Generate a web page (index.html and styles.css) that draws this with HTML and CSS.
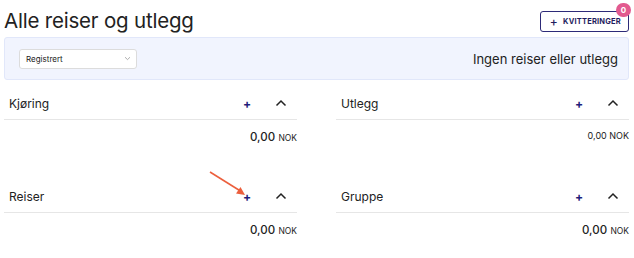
FILE: index.html
```html
<!DOCTYPE html>
<html lang="nb">
<head>
    <meta charset="UTF-8">
    <meta name="viewport" content="width=device-width, initial-scale=1.0">
    <title>Alle reiser og utlegg</title>
    <link rel="stylesheet" href="styles.css">
</head>
<body>
    <div class="page">
        <div class="top">
            <h1>Alle reiser og utlegg</h1>
            <button class="receipts" type="button">
                <span class="plus">+</span> KVITTERINGER
                <span class="badge">0</span>
            </button>
        </div>

        <div class="filter-bar">
            <div class="select">
                <span>Registrert</span>
                <svg width="7" height="5" viewBox="0 0 7 5"><path d="M1 1.2 3.5 3.6 6 1.2" fill="none" stroke="#999" stroke-width="0.8"/></svg>
            </div>
            <div class="empty">Ingen reiser eller utlegg</div>
        </div>

        <div class="sections">
            <div class="section">
                <div class="section-head">
                    <span class="section-title">Kjøring</span>
                    <span class="add">+</span>
                    <svg class="chevron" width="12" height="8" viewBox="0 0 12 8"><path d="M1.5 6.5 6 2 10.5 6.5" fill="none" stroke="#222" stroke-width="1.5"/></svg>
                </div>
                <div class="sum"><b>0,00</b> <small>NOK</small></div>
            </div>
            <div class="section">
                <div class="section-head">
                    <span class="section-title">Utlegg</span>
                    <span class="add">+</span>
                    <svg class="chevron" width="12" height="8" viewBox="0 0 12 8"><path d="M1.5 6.5 6 2 10.5 6.5" fill="none" stroke="#222" stroke-width="1.5"/></svg>
                </div>
                <div class="sum small-sum">0,00 NOK</div>
            </div>
            <div class="section">
                <div class="section-head">
                    <span class="section-title">Reiser</span>
                    <span class="add">+</span>
                    <svg class="chevron" width="12" height="8" viewBox="0 0 12 8"><path d="M1.5 6.5 6 2 10.5 6.5" fill="none" stroke="#222" stroke-width="1.5"/></svg>
                </div>
                <div class="sum"><b>0,00</b> <small>NOK</small></div>
            </div>
            <div class="section">
                <div class="section-head">
                    <span class="section-title">Gruppe</span>
                    <span class="add">+</span>
                    <svg class="chevron" width="12" height="8" viewBox="0 0 12 8"><path d="M1.5 6.5 6 2 10.5 6.5" fill="none" stroke="#222" stroke-width="1.5"/></svg>
                </div>
                <div class="sum"><b>0,00</b> <small>NOK</small></div>
            </div>
        </div>
    </div>

    <svg class="arrow" width="40" height="28" viewBox="0 0 40 28">
        <path d="M1 1 L33 21" stroke="#ec5f3d" stroke-width="1.6" fill="none"/>
        <path d="M36 24 L27 22.5 L31.5 16 Z" fill="#ec5f3d"/>
    </svg>
</body>
</html>
```

FILE: styles.css
```css
body {
    margin: 0;
    font-family: 'Inter', 'Noto Sans', sans-serif;
    color: #222;
    background: #fff;
}
.page {
    padding: 0 5px 0 4px;
}
.top {
    display: flex;
    justify-content: space-between;
    align-items: flex-end;
    height: 33px;
}
h1 {
    margin: 0;
    font-size: 20.5px;
    font-weight: 400;
    letter-spacing: -0.2px;
}
.receipts {
    position: relative;
    display: flex;
    align-items: center;
    gap: 5px;
    height: 21px;
    margin-bottom: 1px;
    padding: 0 7px 0 9px;
    border: 1.5px solid #2d2a78;
    border-radius: 3px;
    background: #fff;
    color: #1f1d5e;
    font-family: inherit;
    font-size: 7.5px;
    font-weight: 700;
    letter-spacing: 0.2px;
}
.receipts .plus {
    font-size: 12px;
    font-weight: 500;
}
.badge {
    position: absolute;
    top: -9px;
    right: -3px;
    width: 15px;
    height: 14px;
    border-radius: 7px;
    background: #e25a8f;
    color: #fff;
    font-size: 8px;
    font-weight: 700;
    line-height: 14px;
    text-align: center;
}
.filter-bar {
    display: flex;
    justify-content: space-between;
    align-items: center;
    height: 41px;
    margin-top: 4px;
    padding: 0 10px 0 14px;
    background: #f1f4fe;
    border: 1px solid #e1e7fa;
    border-radius: 3px;
}
.select {
    display: flex;
    justify-content: space-between;
    align-items: center;
    box-sizing: border-box;
    width: 118px;
    height: 20px;
    padding: 0 5px 0 6px;
    background: #fff;
    border: 1px solid #dcdcdc;
    border-radius: 3px;
    font-size: 8px;
}
.empty {
    font-size: 13px;
}
.sections {
    display: grid;
    grid-template-columns: 293px 293px;
    column-gap: 39px;
    row-gap: 36px;
    margin-top: 7px;
}
.section-head {
    display: flex;
    align-items: center;
    height: 32px;
    padding: 0 8px 0 5px;
    border-bottom: 1px solid #e6e6e6;
}
.section-title {
    flex: 1;
    font-size: 12px;
}
.add {
    width: 32px;
    color: #1f1d7a;
    font-size: 12px;
    font-weight: 700;
}
.chevron {
    margin-right: 2px;
}
.sum {
    margin-top: 10px;
    text-align: right;
    font-size: 11.5px;
}
.sum b {
    font-weight: 500;
}
.sum small {
    font-size: 8.5px;
}
.small-sum {
    font-size: 9px;
}
.arrow {
    position: absolute;
    left: 209px;
    top: 171px;
}
```
